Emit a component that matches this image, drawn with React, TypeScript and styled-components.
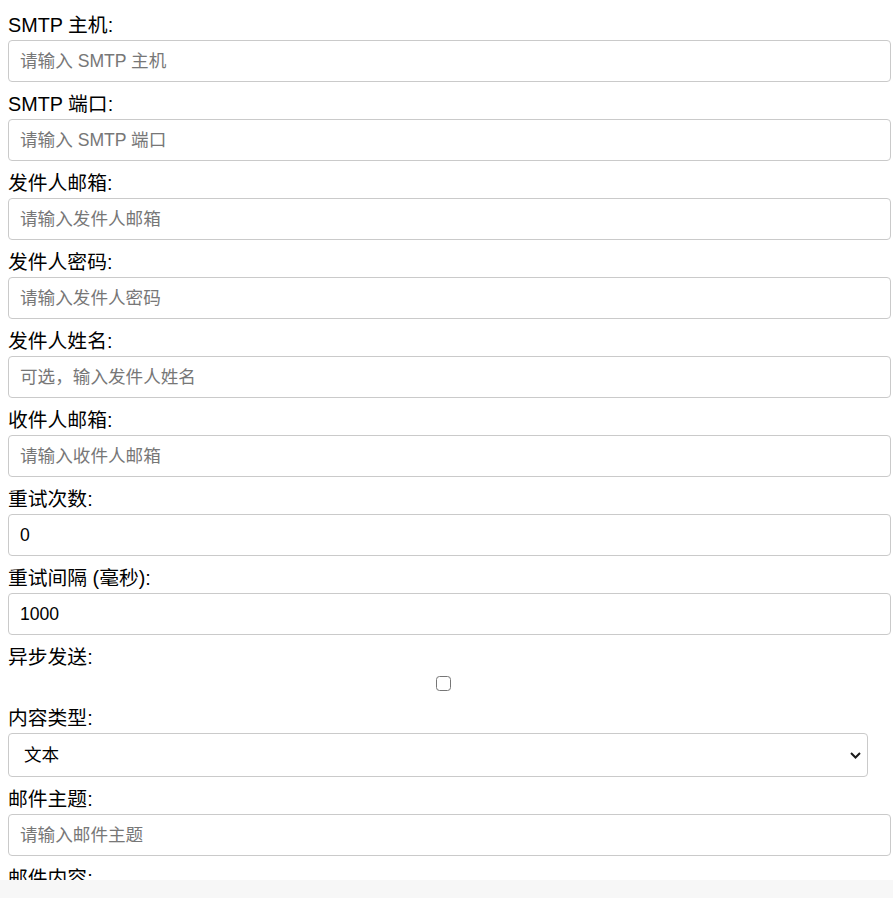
import styled, { createGlobalStyle } from 'styled-components';

const GlobalStyle = createGlobalStyle`
  html {
    overflow: hidden;
  }
  body {
    margin: 8px 0 8px 8px;
    background: #fff;
    color: #000;
    font-family: "Liberation Sans", Arial, "Noto Sans CJK SC", sans-serif;
  }
`;

const Form = styled.form`
  width: 860px;
  padding-top: 6px;
`;

const Label = styled.label`
  display: block;
  font-size: 19.8px;
  line-height: 22px;
  height: 22px;
  margin-bottom: 4px;
  white-space: nowrap;
`;

const Input = styled.input`
  display: block;
  box-sizing: content-box;
  width: 100%;
  height: 20px;
  padding: 10px 10px 10px 11px;
  margin: 0 0 11px 0;
  border: 1px solid #cacaca;
  border-radius: 4px;
  font-family: "Liberation Sans", Arial, "Noto Sans CJK SC", sans-serif;
  font-size: 17.6px;
  line-height: 20px;
  color: #000;
  background: #fff;
  outline: none;

  &::placeholder {
    color: #777;
  }
`;

const CheckRow = styled.div`
  display: flex;
  justify-content: center;
  width: 870px;
  padding-top: 4px;
  margin-bottom: 16px;
`;

const Checkbox = styled.input`
  appearance: none;
  width: 15px;
  height: 15px;
  margin: 0;
  border: 1.5px solid #767676;
  border-radius: 3.5px;
  background: #fff;
  box-sizing: border-box;
`;

const SelectWrap = styled.div`
  position: relative;
  width: 100%;
  margin-bottom: 11px;
`;

const Select = styled.select`
  display: block;
  appearance: none;
  box-sizing: border-box;
  width: 100%;
  height: 44px;
  padding: 0 30px 0 15px;
  margin: 0;
  border: 1px solid #cacaca;
  border-radius: 4px;
  background: #fff;
  color: #000;
  font-family: "Liberation Sans", Arial, "Noto Sans CJK SC", sans-serif;
  font-size: 17.6px;
  outline: none;
`;

const Chevron = styled.svg`
  position: absolute;
  right: 7px;
  top: 19px;
  width: 11px;
  height: 7px;
  pointer-events: none;
`;

const TextArea = styled.textarea`
  display: block;
  box-sizing: content-box;
  width: 100%;
  height: 100px;
  padding: 10px 10px 10px 11px;
  border: 1px solid #cacaca;
  border-radius: 4px;
  font-family: "Liberation Sans", Arial, "Noto Sans CJK SC", sans-serif;
  font-size: 17.6px;
`;

const BottomBar = styled.div`
  position: fixed;
  left: 0;
  right: 0;
  bottom: 0;
  height: 18px;
  background: #f7f7f7;
`;

const fields = [
  { label: 'SMTP 主机:', placeholder: '请输入 SMTP 主机' },
  { label: 'SMTP 端口:', placeholder: '请输入 SMTP 端口' },
  { label: '发件人邮箱:', placeholder: '请输入发件人邮箱' },
  { label: '发件人密码:', placeholder: '请输入发件人密码', type: 'password' },
  { label: '发件人姓名:', placeholder: '可选，输入发件人姓名' },
  { label: '收件人邮箱:', placeholder: '请输入收件人邮箱' },
  { label: '重试次数:', value: '0' },
  { label: '重试间隔 (毫秒):', value: '1000' },
];

export default function App() {
  return (
    <>
      <GlobalStyle />
      <Form onSubmit={(e) => e.preventDefault()}>
        {fields.map((f, i) => (
          <div key={`field${i}`}>
            <Label>{f.label}</Label>
            <Input
              type={f.type || 'text'}
              placeholder={f.placeholder}
              defaultValue={f.value}
            />
          </div>
        ))}
        <Label>异步发送:</Label>
        <CheckRow>
          <Checkbox type="checkbox" />
        </CheckRow>
        <Label>内容类型:</Label>
        <SelectWrap>
          <Select defaultValue="text">
            <option value="text">文本</option>
            <option value="html">HTML</option>
          </Select>
          <Chevron viewBox="0 0 11 7">
            <path
              d="M1 1 L5.5 5.5 L10 1"
              fill="none"
              stroke="#1a1a1a"
              strokeWidth="2"
            />
          </Chevron>
        </SelectWrap>
        <Label>邮件主题:</Label>
        <Input type="text" placeholder="请输入邮件主题" />
        <Label>邮件内容:</Label>
        <TextArea placeholder="请输入邮件内容" />
      </Form>
      <BottomBar />
    </>
  );
}
